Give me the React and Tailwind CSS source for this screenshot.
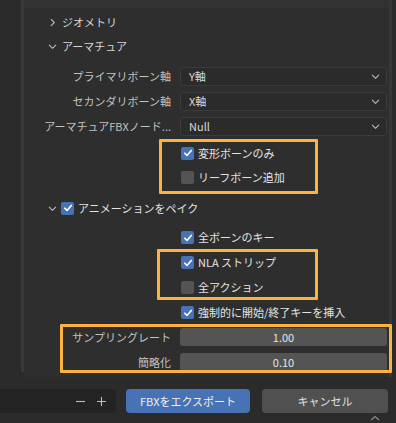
import React from 'react';

const font = { fontFamily: '"Noto Sans CJK JP", "Noto Sans", sans-serif' };

function Chevron({ down }) {
  return (
    <svg width="9" height="9" viewBox="0 0 10 10" className="shrink-0">
      {down ? (
        <path d="M1.5 3.5 L5 7 L8.5 3.5" fill="none" stroke="#bdbdbd" strokeWidth="1.2" strokeLinecap="round" strokeLinejoin="round" />
      ) : (
        <path d="M3.5 1.5 L7 5 L3.5 8.5" fill="none" stroke="#bdbdbd" strokeWidth="1.2" strokeLinecap="round" strokeLinejoin="round" />
      )}
    </svg>
  );
}

function Check({ on }) {
  return (
    <div className={`w-[13px] h-[13px] rounded-[2px] flex items-center justify-center shrink-0 ${on ? 'bg-[#4772b3]' : 'bg-[#545454]'}`}>
      {on && (
        <svg width="10" height="10" viewBox="0 0 10 10">
          <path d="M1.8 5.2 L4 7.4 L8.3 2.4" fill="none" stroke="#ffffff" strokeWidth="1.6" strokeLinecap="round" strokeLinejoin="round" />
        </svg>
      )}
    </div>
  );
}

function SelectRow({ label, value }) {
  return (
    <div className="flex items-center h-[19px]">
      <div className="w-[147px] shrink-0 flex justify-end text-[#c2c2c2] whitespace-nowrap">{label}</div>
      <div className="ml-[9px] w-[207px] h-[19px] rounded-[3px] bg-[#2b2b2b] border border-[#3b3b3b] flex items-center justify-between pl-[8px] pr-[6px]">
        <span className="text-[#d8d8d8]">{value}</span>
        <Chevron down />
      </div>
    </div>
  );
}

function CheckRow({ label, on, h = 'h-[24px]' }) {
  return (
    <div className={`flex items-center ${h} pl-[157px] gap-[4px]`}>
      <Check on={on} />
      <span className="text-[#e4e4e4] whitespace-nowrap">{label}</span>
    </div>
  );
}

function NumberRow({ label, value }) {
  return (
    <div className="flex items-center h-[18px]">
      <div className="w-[147px] shrink-0 text-right text-[#c2c2c2] whitespace-nowrap">{label}</div>
      <div className="ml-[9px] w-[207px] h-[18px] rounded-[3px] bg-[#545454] flex items-center justify-center text-[#e4e4e4]">
        {value}
      </div>
    </div>
  );
}

export default function App() {
  return (
    <div className="w-[396px] h-[423px] bg-[#2b2b2b] flex flex-col overflow-hidden text-[11px] leading-none" style={font}>
      {/* Main area */}
      <div className="relative flex flex-1 min-h-0">
        <div className="w-[21px] bg-[#2b2b2b]" />
        <div className="w-[3px] h-[372px] bg-[#393939]" />
        <div className="flex-1 bg-[#2e2e2e] flex flex-col">
          <div className="h-[8px] bg-[#323232]" />
          {/* Geometry */}
          <div className="mt-[2px] h-[24px] flex items-center pl-[24px] gap-[5px]">
            <Chevron />
            <span className="text-[#d6d6d6]">ジオメトリ</span>
          </div>
          {/* Armature */}
          <div className="h-[24px] flex items-center pl-[24px] gap-[5px]">
            <Chevron down />
            <span className="text-[#d6d6d6]">アーマチュア</span>
          </div>
          <div className="mt-[9px] flex flex-col gap-[6px]">
            <SelectRow label="プライマリボーン軸" value="Y軸" />
            <SelectRow label="セカンダリボーン軸" value="X軸" />
            <SelectRow label="アーマチュアFBXノード..." value="Null" />
          </div>
          <div className="mt-[5px]">
            <CheckRow label="変形ボーンのみ" on />
            <CheckRow label="リーフボーン追加" />
          </div>
          {/* Bake animation */}
          <div className="mt-[7px] h-[24px] flex items-center pl-[24px]">
            <Chevron down />
            <div className="ml-[4px]"><Check on /></div>
            <span className="ml-[4px] text-[#e4e4e4]">アニメーションをペイク</span>
          </div>
          <div className="mt-[5px]">
            <CheckRow label="全ボーンのキー" on h="h-[25px]" />
            <CheckRow label="NLA ストリップ" on h="h-[25px]" />
            <CheckRow label="全アクション" h="h-[25px]" />
            <CheckRow label="強制的に開始/終了キーを挿入" on h="h-[25px]" />
          </div>
          <div className="mt-[3px] flex flex-col gap-[7px]">
            <NumberRow label="サンプリングレート" value="1.00" />
            <NumberRow label="簡略化" value="0.10" />
          </div>
        </div>
        <div className="w-[3px] bg-[#383838]" />
        <div className="w-[4px] bg-[#2b2b2b]" />

        {/* Highlight annotations */}
        <div className="absolute left-[159px] top-[139px] w-[159px] h-[55px] border-[3px] border-[#fbb241] rounded-[1px]" />
        <div className="absolute left-[157px] top-[249px] w-[161px] h-[51px] border-[3px] border-[#fbb241] rounded-[1px]" />
        <div className="absolute left-[60px] top-[324px] w-[332px] h-[49px] border-[3px] border-[#fbb241] rounded-[1px]" />
      </div>

      {/* Footer */}
      <div className="h-[46px] shrink-0 bg-[#2b2b2b] flex items-start pt-[12px] relative">
        <div className="w-[116px] h-[24px] bg-[#232323] rounded-r-[4px] flex items-center justify-end gap-[10px] pr-[9px]">
          <svg width="11" height="11" viewBox="0 0 11 11"><path d="M1 5.5 H10" stroke="#bdbdbd" strokeWidth="1.1" /></svg>
          <svg width="11" height="11" viewBox="0 0 11 11"><path d="M1 5.5 H10 M5.5 1 V10" stroke="#bdbdbd" strokeWidth="1.1" /></svg>
        </div>
        <div className="ml-[10px] w-[124px] h-[24px] rounded-[4px] bg-[#4772b3] flex items-center justify-center text-[#f0f0f0]">
          FBXをエクスポート
        </div>
        <div className="ml-[12px] w-[126px] h-[24px] rounded-[4px] bg-[#505050] flex items-center justify-center text-[#e0e0e0]">
          キャンセル
        </div>
        <svg className="absolute left-[369px] bottom-[1px]" width="12" height="8" viewBox="0 0 12 8">
          <path d="M2 6 L6 2.5 L10 6" fill="none" stroke="#8a8a8a" strokeWidth="1.2" />
        </svg>
      </div>
    </div>
  );
}
